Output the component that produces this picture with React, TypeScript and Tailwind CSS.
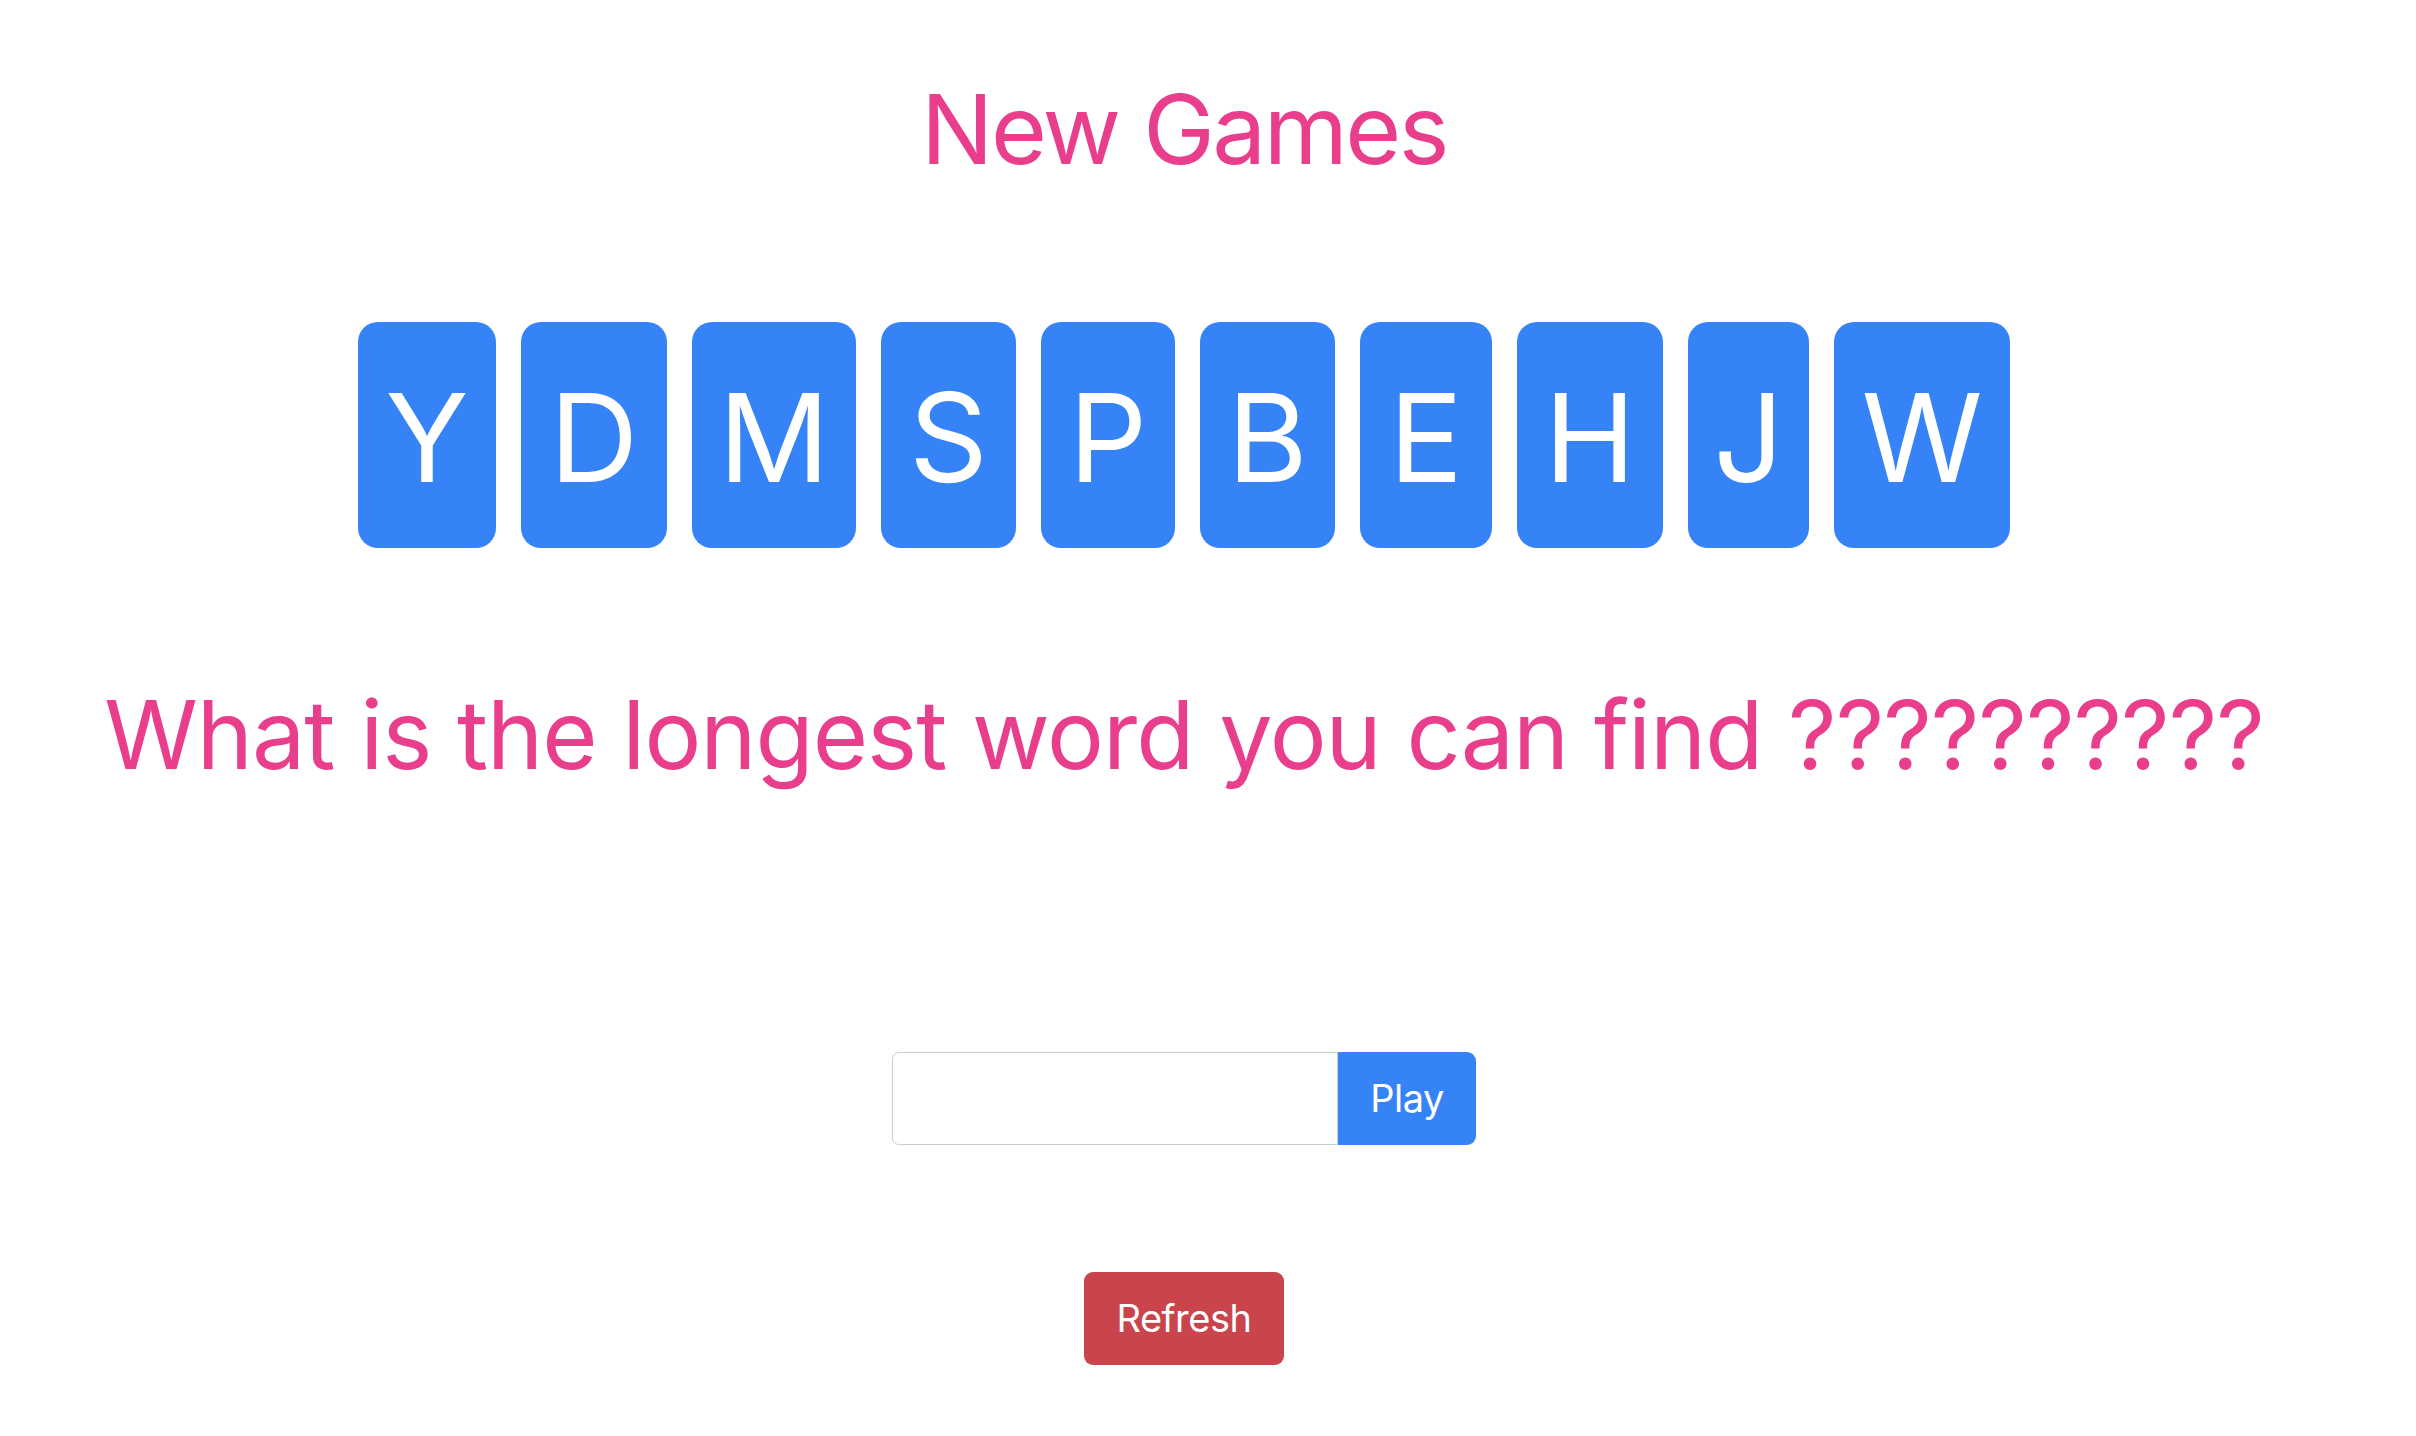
import { useState } from "react";

const tiles = [
  { letter: "Y", w: "w-[138px]" },
  { letter: "D", w: "w-[146px]" },
  { letter: "M", w: "w-[164px]" },
  { letter: "S", w: "w-[135px]" },
  { letter: "P", w: "w-[134px]" },
  { letter: "B", w: "w-[135px]" },
  { letter: "E", w: "w-[132px]" },
  { letter: "H", w: "w-[146px]" },
  { letter: "J", w: "w-[121px]" },
  { letter: "W", w: "w-[176px]" },
];

const App = () => {
  const [word, setWord] = useState("");

  return (
    <main className="min-h-screen bg-white font-['Inter',sans-serif]">
      <div className="w-[2368px] flex flex-col items-center">
        <h1 className="mt-[81px] text-[96px] leading-none font-normal tracking-[-2.5px] text-[#e83e8c]">
          New Games
        </h1>

        <div className="mt-[145px] flex gap-[25px]">
          {tiles.map((t) => (
            <div
              key={t.letter}
              className={`${t.w} h-[226px] pt-[54px] flex justify-center rounded-[20px] bg-[#3583f6] text-white text-[123px] leading-none`}
            >
              {t.letter}
            </div>
          ))}
        </div>

        <h2 className="mt-[139px] text-[95px] leading-none font-normal tracking-[-1px] text-[#e83e8c]">
          What is the longest word you can find ??????????
        </h2>

        <div className="mt-[270px] flex">
          <input
            value={word}
            onChange={(e) => setWord(e.target.value)}
            className="w-[446px] h-[93px] border border-[#c9cfd6] rounded-l-[7px] px-4 text-[38px] outline-none"
          />
          <button
            type="button"
            className="w-[138px] h-[93px] rounded-r-[9px] bg-[#3583f6] text-white text-[38px] tracking-[-0.5px]"
          >
            Play
          </button>
        </div>

        <button
          type="button"
          className="mt-[127px] w-[200px] h-[93px] rounded-[9px] bg-[#c9444b] text-white text-[38px] tracking-[-0.5px]"
        >
          Refresh
        </button>
      </div>
    </main>
  );
};

export default App;
